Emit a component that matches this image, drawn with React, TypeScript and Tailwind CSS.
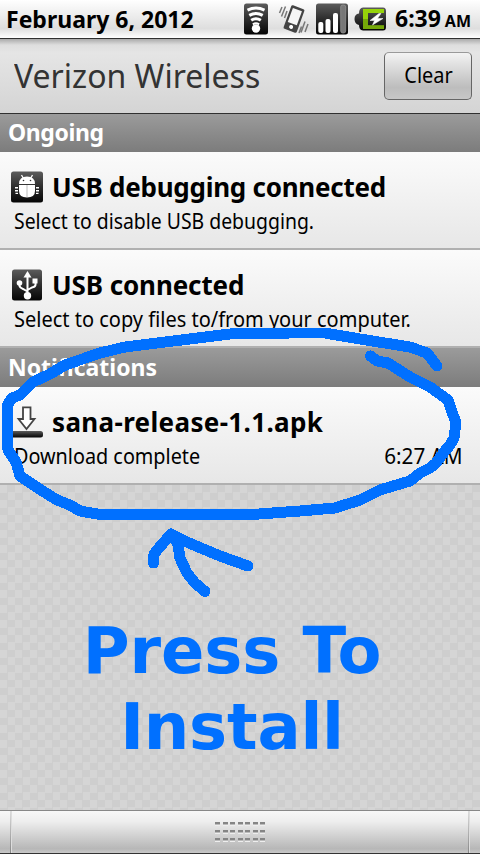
import type { ReactNode } from "react";

function WifiIcon() {
  return (
    <svg className="h-8 w-6" viewBox="0 0 24 32">
      <rect width="24" height="31" y="0.5" rx="2.5" fill="url(#tile)" />
      <g fill="none" stroke="#fff" strokeWidth="3">
        <path d="M3.500 7.100Q12 3.100 20.500 7.100" />
        <path d="M5.300 12.400Q12 8.500 18.700 12.400" />
        <path d="M7.200 17.300Q12 14.100 16.800 17.300" />
        <path d="M8.800 21.300Q12 19.300 15.200 21.300" strokeWidth="2" />
      </g>
      <circle cx="12" cy="25.500" r="4.200" fill="#fff" />
    </svg>
  );
}

function VibrateIcon() {
  return (
    <svg className="h-8 w-8" viewBox="0 0 32 32">
      <g transform="rotate(20 16 16)">
        <rect x="9" y="3.500" width="14" height="25" rx="1.500" fill="#444" />
        <rect x="11.200" y="6" width="9.600" height="15" fill="#f6f6f6" />
        <circle cx="16" cy="24.500" r="2" fill="#fff" />
      </g>
      <g stroke="#777" strokeWidth="1.500" fill="none">
        <path d="M4 4L1.500 10M7.500 3.500L3.500 13.500M9 8L6.500 15M23.500 23.500L21 30M27 18.500L23 29.500M30 21L27 29" />
      </g>
    </svg>
  );
}

function SignalIcon() {
  return (
    <svg className="h-8 w-8" viewBox="0 0 32 32">
      <rect width="32" height="31" y="0.500" rx="2.500" fill="url(#tile)" />
      <g fill="#fff">
        <rect x="2.300" y="19" width="5" height="11" rx="2" />
        <rect x="9.500" y="16" width="5" height="14" rx="2" />
        <rect x="17" y="10" width="5" height="20" rx="2" />
      </g>
      <rect x="24.700" y="2" width="5" height="28" rx="2" fill="#777" stroke="#999" strokeWidth="0.700" />
    </svg>
  );
}

function BatteryIcon() {
  return (
    <svg className="h-8 w-8" viewBox="0 0 32 32">
      <path d="M9 4.500H29Q32 4.500 32 8V24Q32 27.500 29 27.500H9Q5 27 5 22Q0.500 21 0.500 16Q0.500 11 5 10.500Q5 5 9 4.500Z" fill="url(#tile)" />
      <path d="M9 6H30V10H14V22.500H30V26H9Z" fill="#96d40a" />
      <path d="M9 16H14V22.500H30V26H9Z" fill="#75a808" />
      <path d="M25 10.500L16 17.500H20.500L18.500 22L29 15.500H23.500L27 10.500Z" fill="#fff" stroke="#fff" strokeWidth="0.500" />
    </svg>
  );
}

function DebugIcon() {
  return (
    <svg className="h-8 w-8" viewBox="0 0 32 32">
      <rect y="0.500" width="32" height="31" rx="2.500" fill="url(#tile)" />
      <g fill="#fff">
        <path d="M8 13Q8 5.500 16 5.500T24 13Z" />
        <path d="M8 14H24V20Q24 26.500 16 26.500T8 20Z" />
        <path d="M4 16H7V17.500H4ZM4 19H7V20.500H4ZM4.500 21.800H7V23H4.500ZM25 16H28V17.500H25ZM25 19H28V20.500H25ZM25 21.800H27.500V23H25Z" />
      </g>
      <path d="M10.500 4L12.500 7.500M21.500 4L19.500 7.500" stroke="#fff" strokeWidth="1.300" />
      <path d="M16 14V26" stroke="#bbb" />
      <circle cx="12.500" cy="9.500" r="0.800" fill="#333" />
      <circle cx="19.500" cy="9.500" r="0.800" fill="#333" />
    </svg>
  );
}

function UsbIcon() {
  return (
    <svg className="h-8 w-8" viewBox="0 0 32 32">
      <rect x="1" y="0.500" width="30" height="31" rx="2.500" fill="url(#tile)" />
      <path d="M16.500 7V27M8.500 14V17Q9 19 12 20L16.500 22.500M24.500 12V16Q24 18 21 18.500L16.500 21" fill="none" stroke="#fff" strokeWidth="2" />
      <path d="M16.500 2L20.500 8.500H12.500Z" fill="#fff" />
      <circle cx="8.500" cy="14" r="2.800" fill="#fff" />
      <rect x="21.500" y="9.500" width="5" height="5" fill="#fff" />
      <circle cx="16.500" cy="26.800" r="3.700" fill="#fff" />
    </svg>
  );
}

function DownloadIcon() {
  return (
    <svg className="h-8 w-8" viewBox="0 0 32 32">
      <path d="M12 1.300H19.500V13H23.500L15.500 23L7.500 13H12Z" fill="#fff" stroke="#444" strokeWidth="1.800" />
      <rect x="0" y="25" width="32" height="6.500" rx="2.500" fill="url(#tile)" />
    </svg>
  );
}

function SectionTitle({ children, className = "" }: { children: ReactNode; className?: string }) {
  return (
    <h2 className={"flex shrink-0 items-center bg-linear-to-b from-[#9b9b9b] to-[#7c7c7c] pl-2 text-[23px] font-bold leading-none text-white " + className}>
      {children}
    </h2>
  );
}

type RowProps = {
  icon: ReactNode;
  title: string;
  titleClass: string;
  detail: string;
  detailClass: string;
  time?: ReactNode;
};

function NotificationRow({ icon, title, titleClass, detail, detailClass, time }: RowProps) {
  return (
    <div className="flex h-[98px] shrink-0 flex-col border-b-2 border-[#b0b0b0] bg-linear-to-b from-[#fbfbfb] to-[#e7e7e7] pt-[19px]">
      <div className="flex h-8 items-center gap-[9px] pl-[11px]">
        {icon}
        <span className={"whitespace-nowrap text-[26px] font-bold leading-8 " + titleClass}>{title}</span>
      </div>
      <div className="mt-[4px] flex justify-between pr-[17px] pl-[14px] text-[21px] leading-[28px]">
        <span className={"origin-left whitespace-nowrap " + detailClass}>{detail}</span>
        {time}
      </div>
    </div>
  );
}

export default function App() {
  return (
    <div className="relative flex h-[854px] w-[480px] flex-col overflow-hidden bg-[#d3d3d3] font-['Noto_Sans',sans-serif] text-black">
      <svg className="absolute h-0 w-0">
        <defs>
          <linearGradient id="tile" x1="0" y1="0" x2="0" y2="1">
            <stop offset="0" stopColor="#5c5c5c" />
            <stop offset="0.500" stopColor="#2d2d2d" />
            <stop offset="1" stopColor="#050505" />
          </linearGradient>
        </defs>
      </svg>
      <header className="flex h-[39px] shrink-0 items-center border-b border-[#303030] bg-linear-to-b from-white via-[#dedede] via-75% to-white pr-[9px] pl-[6px]">
        <span className="whitespace-nowrap text-[23px] font-bold leading-8">February 6, 2012</span>
        <div className="ml-auto flex items-center">
          <WifiIcon />
          <span className="w-[10px]" />
          <VibrateIcon />
          <span className="w-[6px]" />
          <SignalIcon />
          <span className="w-[6px]" />
          <BatteryIcon />
          <div className="ml-[9px] flex w-[76px] items-baseline justify-between whitespace-nowrap font-bold leading-8">
            <span className="text-[23px]">6:39</span>
            <span className="text-[16px]">AM</span>
          </div>
        </div>
      </header>
      <div className="flex h-[75px] shrink-0 items-center justify-between border-b border-[#303030] bg-[linear-gradient(#aaa,#dedede_6px,#e5e5e5_14px,#d4d4d4)] pr-2 pb-px pl-[14px]">
        <span className="origin-left scale-x-[0.970] whitespace-nowrap text-[33px] leading-none text-[#333]">Verizon Wireless</span>
        <button className="h-12 w-[88px] rounded-[5px] border border-[#666] border-t-[#999] bg-linear-to-b from-[#f3f3f3] via-[#bdbdbd] via-75% to-[#c7c7c7] text-[21px] leading-none">
          <span className="inline-block scale-x-[0.950]">Clear</span>
        </button>
      </div>
      <SectionTitle className="h-[38px] pb-px tracking-[-0.400px]">Ongoing</SectionTitle>
      <NotificationRow
        icon={<DebugIcon />}
        title="USB debugging connected"
        titleClass="tracking-[-0.250px]"
        detail="Select to disable USB debugging."
        detailClass="scale-x-[0.924]"
      />
      <NotificationRow
        icon={<UsbIcon />}
        title="USB connected"
        titleClass="tracking-[-0.100px]"
        detail="Select to copy files to/from your computer."
        detailClass="scale-x-[0.952]"
      />
      <SectionTitle className="h-[39px]">Notifications</SectionTitle>
      <NotificationRow
        icon={<DownloadIcon />}
        title="sana-release-1.1.apk"
        titleClass="tracking-[0.350px]"
        detail="Download complete"
        detailClass="scale-x-[0.943]"
        time={<span className="origin-right scale-x-[0.985] whitespace-nowrap">6:27 AM</span>}
      />
      <main className="flex grow flex-col items-center bg-[repeating-conic-gradient(#cecece_0_25%,#d5d5d5_0_50%)] bg-[size:15px_15px] pt-[128px] pr-[16px] font-['DejaVu_Sans',sans-serif] text-[64px] font-bold leading-[76px] text-[#0070ff]">
        <span className="whitespace-nowrap tracking-[-0.100px]">Press To</span>
        <span className="tracking-[-0.200px]">Install</span>
      </main>
      <footer className="flex h-11 shrink-0 items-center justify-between border-t border-b border-t-[#888] border-b-[#333] bg-[linear-gradient(#f8f8f8,#eee_25%,#b7b7b7_90%,#c9c9c9)] px-[10px]">
        <span className="h-full w-[2px] border-r border-[#ddd] bg-linear-to-b from-[#ddd] to-[#888]" />
        <div className="grid grid-cols-7 gap-x-[2.500px] gap-y-[4px]">
          {Array.from({ length: 21 }, (_, i) => (
            <span key={i} className="h-1 w-[5px] border-t-2 border-b border-t-[#858585] border-b-[#eee] bg-[#bbb]" />
          ))}
        </div>
        <span className="h-full w-[2px] border-r border-[#ddd] bg-linear-to-b from-[#ddd] to-[#888]" />
      </footer>
      <svg className="absolute top-0 left-0 h-[854px] w-[480px]" viewBox="0 0 480 854" fill="none" stroke="#0070ff" strokeWidth="11" strokeLinecap="round" strokeLinejoin="round" shapeRendering="crispEdges">
        <path d="M370.500 356L377 361L388 363L410 377L430 387L448 400L452 412L456 422L454 438L450 445L444 452L436 463L430 468L420 473L410 481L380 490L360 500L335 508L300 511L245 515L160 514.500L100 514.500L80 511L70 505L57 500L41 490L20 476L16 462L8 450L7.500 405L12 398L20 395L33 382L50 374L65 365L100 353L125 347L165 342L230 334L290 333L325 333L360 339L410 347L427 353L437 366" />
        <path d="M153.500 563L154 554L158 549L171 534L189 543L220 556L248 566M171 534L178 544L180 558L187 573L195 583L205 591.500" />
      </svg>
    </div>
  );
}
